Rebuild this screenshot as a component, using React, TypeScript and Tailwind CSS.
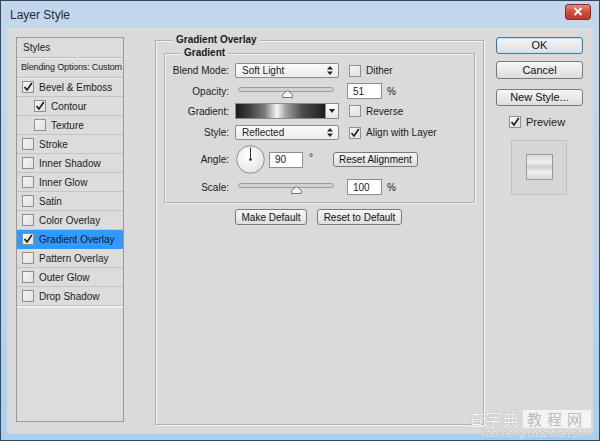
import React from "react";

const font = "font-['Liberation_Sans',Arial,sans-serif]";

function Check({ on }: { on?: boolean }) {
  return (
    <div className="w-[12px] h-[12px] shrink-0 border border-[#8e8f8f] bg-gradient-to-br from-[#f4f4f4] to-[#e2e2e2] flex items-center justify-center">
      {on && (
        <svg width="10" height="10" viewBox="0 0 10 10">
          <path d="M1.5 5 L4 8 L8.8 1" fill="none" stroke="#1a1a1a" strokeWidth="1.6" />
        </svg>
      )}
    </div>
  );
}

function Btn({ children, w, h = 16, def }: { children: React.ReactNode; w: number; h?: number; def?: boolean }) {
  return (
    <div
      style={{ width: w, height: h }}
      className={
        "flex items-center justify-center rounded-[3px] border bg-gradient-to-b from-[#f6f6f6] to-[#dedede] text-[#111] whitespace-nowrap " +
        (def ? "border-[#3d7bad] shadow-[inset_0_0_0_1px_#bfe3f7]" : "border-[#7a7a7a]")
      }
    >
      {children}
    </div>
  );
}

function UpDown() {
  return (
    <svg width="6" height="9" viewBox="0 0 6 9">
      <path d="M3 0 L6 3.5 H0 Z M3 9 L0 5.5 H6 Z" fill="#222" />
    </svg>
  );
}

function Select({ value }: { value: string }) {
  return (
    <div className="w-[104px] h-[15px] rounded-[2px] border border-[#8a8a8a] bg-gradient-to-b from-[#fbfbfb] to-[#ececec] flex items-center justify-between pl-[6px] pr-[5px]">
      <span>{value}</span>
      <UpDown />
    </div>
  );
}

function Slider({ pct }: { pct: number }) {
  return (
    <div className="w-[104px] h-[15px] pl-[3px] pr-[5px] pt-[3px]">
      <div className="relative h-[5px] rounded-full border border-[#9b9b9b] bg-[#d2d2d2]">
        <svg width="11" height="8" viewBox="0 0 11 8" className="absolute top-[2px] -ml-[5px]" style={{ left: `${pct}%` }}>
          <path d="M5.5 0.5 L10.5 4.5 V7.5 H0.5 V4.5 Z" fill="#f3f3f3" stroke="#777" />
        </svg>
      </div>
    </div>
  );
}

function Field({ value, w = 35 }: { value: string; w?: number }) {
  return (
    <div style={{ width: w }} className="h-[16px] border border-[#8f8f8f] bg-white flex items-center pl-[5px]">
      {value}
    </div>
  );
}

function Row({ label, h, mt, children }: { label: string; h: number; mt: number; children: React.ReactNode }) {
  return (
    <div style={{ height: h, marginTop: mt }} className="flex items-center">
      <div className="w-[65px] text-right pr-[1px] shrink-0">{label}</div>
      <div className="ml-[5px] flex items-center">{children}</div>
    </div>
  );
}

const items: { label: string; on?: boolean; indent?: boolean; sel?: boolean }[] = [
  { label: "Bevel & Emboss", on: true },
  { label: "Contour", on: true, indent: true },
  { label: "Texture", indent: true },
  { label: "Stroke" },
  { label: "Inner Shadow" },
  { label: "Inner Glow" },
  { label: "Satin" },
  { label: "Color Overlay" },
  { label: "Gradient Overlay", on: true, sel: true },
  { label: "Pattern Overlay" },
  { label: "Outer Glow" },
  { label: "Drop Shadow" },
];

export default function App() {
  return (
    <div className={"w-[600px] h-[441px] border border-[#33475b] bg-gradient-to-b from-[#c3d7ec] via-[#bed6ee] to-[#a6d0f2] flex flex-col text-[10px] text-[#1b1b1b] relative " + font}>
      {/* title bar */}
      <div className="h-[27px] flex items-center justify-between pl-[9px] pr-[8px]">
        <span className="text-[12px] text-[#1e2b3a]">Layer Style</span>
        <div className="w-[26px] h-[16px] -mt-[6px] rounded-[3px] border border-[#8a2a22] bg-gradient-to-b from-[#e58a7c] via-[#cf4b39] to-[#c0392b] flex items-center justify-center">
          <svg width="10" height="9" viewBox="0 0 10 9">
            <path d="M1.5 1 L8.5 8 M8.5 1 L1.5 8" stroke="#fff" strokeWidth="2" />
          </svg>
        </div>
      </div>

      {/* client */}
      <div className="mx-[6px] mb-[6px] flex-1 bg-[#dadada] flex pl-[9px] pt-[9px]">
        {/* styles list */}
        <div className="w-[108px] h-[385px] border border-[#999] bg-[#dcdcdc] flex flex-col whitespace-nowrap">
          <div className="h-[20px] shrink-0 flex items-center pl-[6px] border-b border-[#bdbdbd] shadow-[0_1px_0_#efefef]">Styles</div>
          <div className="h-[20px] shrink-0 flex items-center pl-[4px] text-[9px] tracking-[-0.15px] border-b border-[#bdbdbd] shadow-[0_1px_0_#efefef]">Blending Options: Custom</div>
          {items.map((it) => (
            <div
              key={it.label}
              className={
                "h-[19px] shrink-0 flex items-center gap-[5px] border-b " +
                (it.indent ? "pl-[17px] " : "pl-[5px] ") +
                (it.sel ? "bg-[#3399ff] border-[#3399ff] text-[#0a1a30]" : "border-[#c4c4c4]")
              }
            >
              <Check on={it.on} />
              <span>{it.label}</span>
            </div>
          ))}
          <div className="h-[2px] shrink-0 bg-[#f0f0f0]" />
        </div>

        {/* gradient overlay group */}
        <fieldset className="ml-[31px] -mt-[3px] w-[329px] h-[391px] border border-[#b0b0b0] shadow-[inset_1px_1px_0_#f2f2f2,1px_1px_0_#f2f2f2] flex flex-col">
          <legend className="ml-[17px] px-[3px] h-[12px] leading-[12px] font-bold bg-[#dadada]">Gradient Overlay</legend>
          <fieldset className="ml-[8px] mt-[1px] w-[311px] border border-[#b0b0b0] shadow-[inset_1px_1px_0_#f2f2f2,1px_1px_0_#f2f2f2] pb-[7px]">
            <legend className="ml-[16px] px-[3px] h-[12px] leading-[12px] font-bold bg-[#dadada]">Gradient</legend>
            <Row label="Blend Mode:" h={15} mt={4}>
              <Select value="Soft Light" />
              <div className="ml-[10px] flex items-center gap-[5px]">
                <Check />
                <span>Dither</span>
              </div>
            </Row>
            <Row label="Opacity:" h={16} mt={5}>
              <Slider pct={51} />
              <div className="ml-[8px]"><Field value="51" /></div>
              <span className="ml-[5px]">%</span>
            </Row>
            <Row label="Gradient:" h={16} mt={4}>
              <div className="w-[104px] h-[16px] flex border border-[#8a8a8a]">
                <div className="flex-1 bg-[linear-gradient(to_right,#1b1b1b_0%,#3e3e3e_15%,#7a7a7a_32%,#f6f6f6_46%,#a0a0a0_56%,#4e4e4e_74%,#1e1e1e_100%)]" />
                <div className="w-[13px] border-l border-[#8a8a8a] bg-gradient-to-b from-[#fafafa] to-[#e6e6e6] flex items-center justify-center">
                  <svg width="6" height="4" viewBox="0 0 6 4"><path d="M0 0 H6 L3 4 Z" fill="#222" /></svg>
                </div>
              </div>
              <div className="ml-[10px] flex items-center gap-[5px]">
                <Check />
                <span>Reverse</span>
              </div>
            </Row>
            <Row label="Style:" h={15} mt={6}>
              <Select value="Reflected" />
              <div className="ml-[10px] flex items-center gap-[5px]">
                <Check on />
                <span>Align with Layer</span>
              </div>
            </Row>
            <Row label="Angle:" h={29} mt={5}>
              <svg width="29" height="29" viewBox="0 0 29 29" className="ml-[1px]">
                <defs>
                  <radialGradient id="dial" cx="40%" cy="35%" r="70%">
                    <stop offset="0" stopColor="#ffffff" />
                    <stop offset="1" stopColor="#e3e3e3" />
                  </radialGradient>
                </defs>
                <circle cx="14.5" cy="14.5" r="13.8" fill="url(#dial)" stroke="#8d8d8d" />
                <line x1="14.5" y1="14.5" x2="14.5" y2="2.5" stroke="#333" strokeWidth="1" />
                <circle cx="14.5" cy="14.5" r="1.3" fill="#222" />
              </svg>
              <div className="ml-[4px]"><Field value="90" w={34} /></div>
              <span className="ml-[6px] -mt-[4px]">°</span>
              <div className="ml-[20px]"><Btn w={85} h={15}>Reset Alignment</Btn></div>
            </Row>
            <Row label="Scale:" h={16} mt={5}>
              <Slider pct={61} />
              <div className="ml-[8px]"><Field value="100" /></div>
              <span className="ml-[5px]">%</span>
            </Row>
          </fieldset>
          <div className="flex mt-[6px] ml-[79px] gap-[10px]">
            <Btn w={72} h={16}>Make Default</Btn>
            <Btn w={85} h={16}>Reset to Default</Btn>
          </div>
        </fieldset>

        {/* right column */}
        <div className="ml-[12px] w-[87px] flex flex-col text-[11px]">
          <Btn w={87} h={17} def>OK</Btn>
          <div className="mt-[7px]"><Btn w={87} h={18}>Cancel</Btn></div>
          <div className="mt-[10px]"><Btn w={87} h={17}>New Style...</Btn></div>
          <div className="mt-[8px] ml-[13px] flex items-center gap-[5px]">
            <Check on />
            <span>Preview</span>
          </div>
          <div className="mt-[9px] ml-[15px] w-[56px] h-[55px] border border-[#c2c2c2] bg-[#d6d6d6] flex items-center justify-center">
            <div className="w-[27px] h-[26px] border border-[#9a9a9a] bg-[linear-gradient(to_bottom,#d8d8d8_0%,#f0f0f0_30%,#cfcfcf_50%,#f0f0f0_70%,#d8d8d8_100%)]" />
          </div>
        </div>
      </div>

      {/* watermark */}
      <div className="absolute right-[8px] bottom-[1px] flex flex-col items-end font-['Noto_Sans_CJK_SC',sans-serif] pointer-events-none">
        <div className="flex items-center gap-[4px]">
          <span className="text-[17px] leading-[18px] text-white/90 [text-shadow:0_0_1px_#888]">查字典</span>
          <span className="px-[4px] bg-white/70 text-[15px] leading-[18px] tracking-[5px] text-[#bbb]">教程网</span>
        </div>
        <span className="text-[10px] leading-[11px] text-white/90 [text-shadow:0_0_1px_#777] font-['Liberation_Sans',sans-serif]">jiaocheng.chazidian.com</span>
      </div>
    </div>
  );
}
